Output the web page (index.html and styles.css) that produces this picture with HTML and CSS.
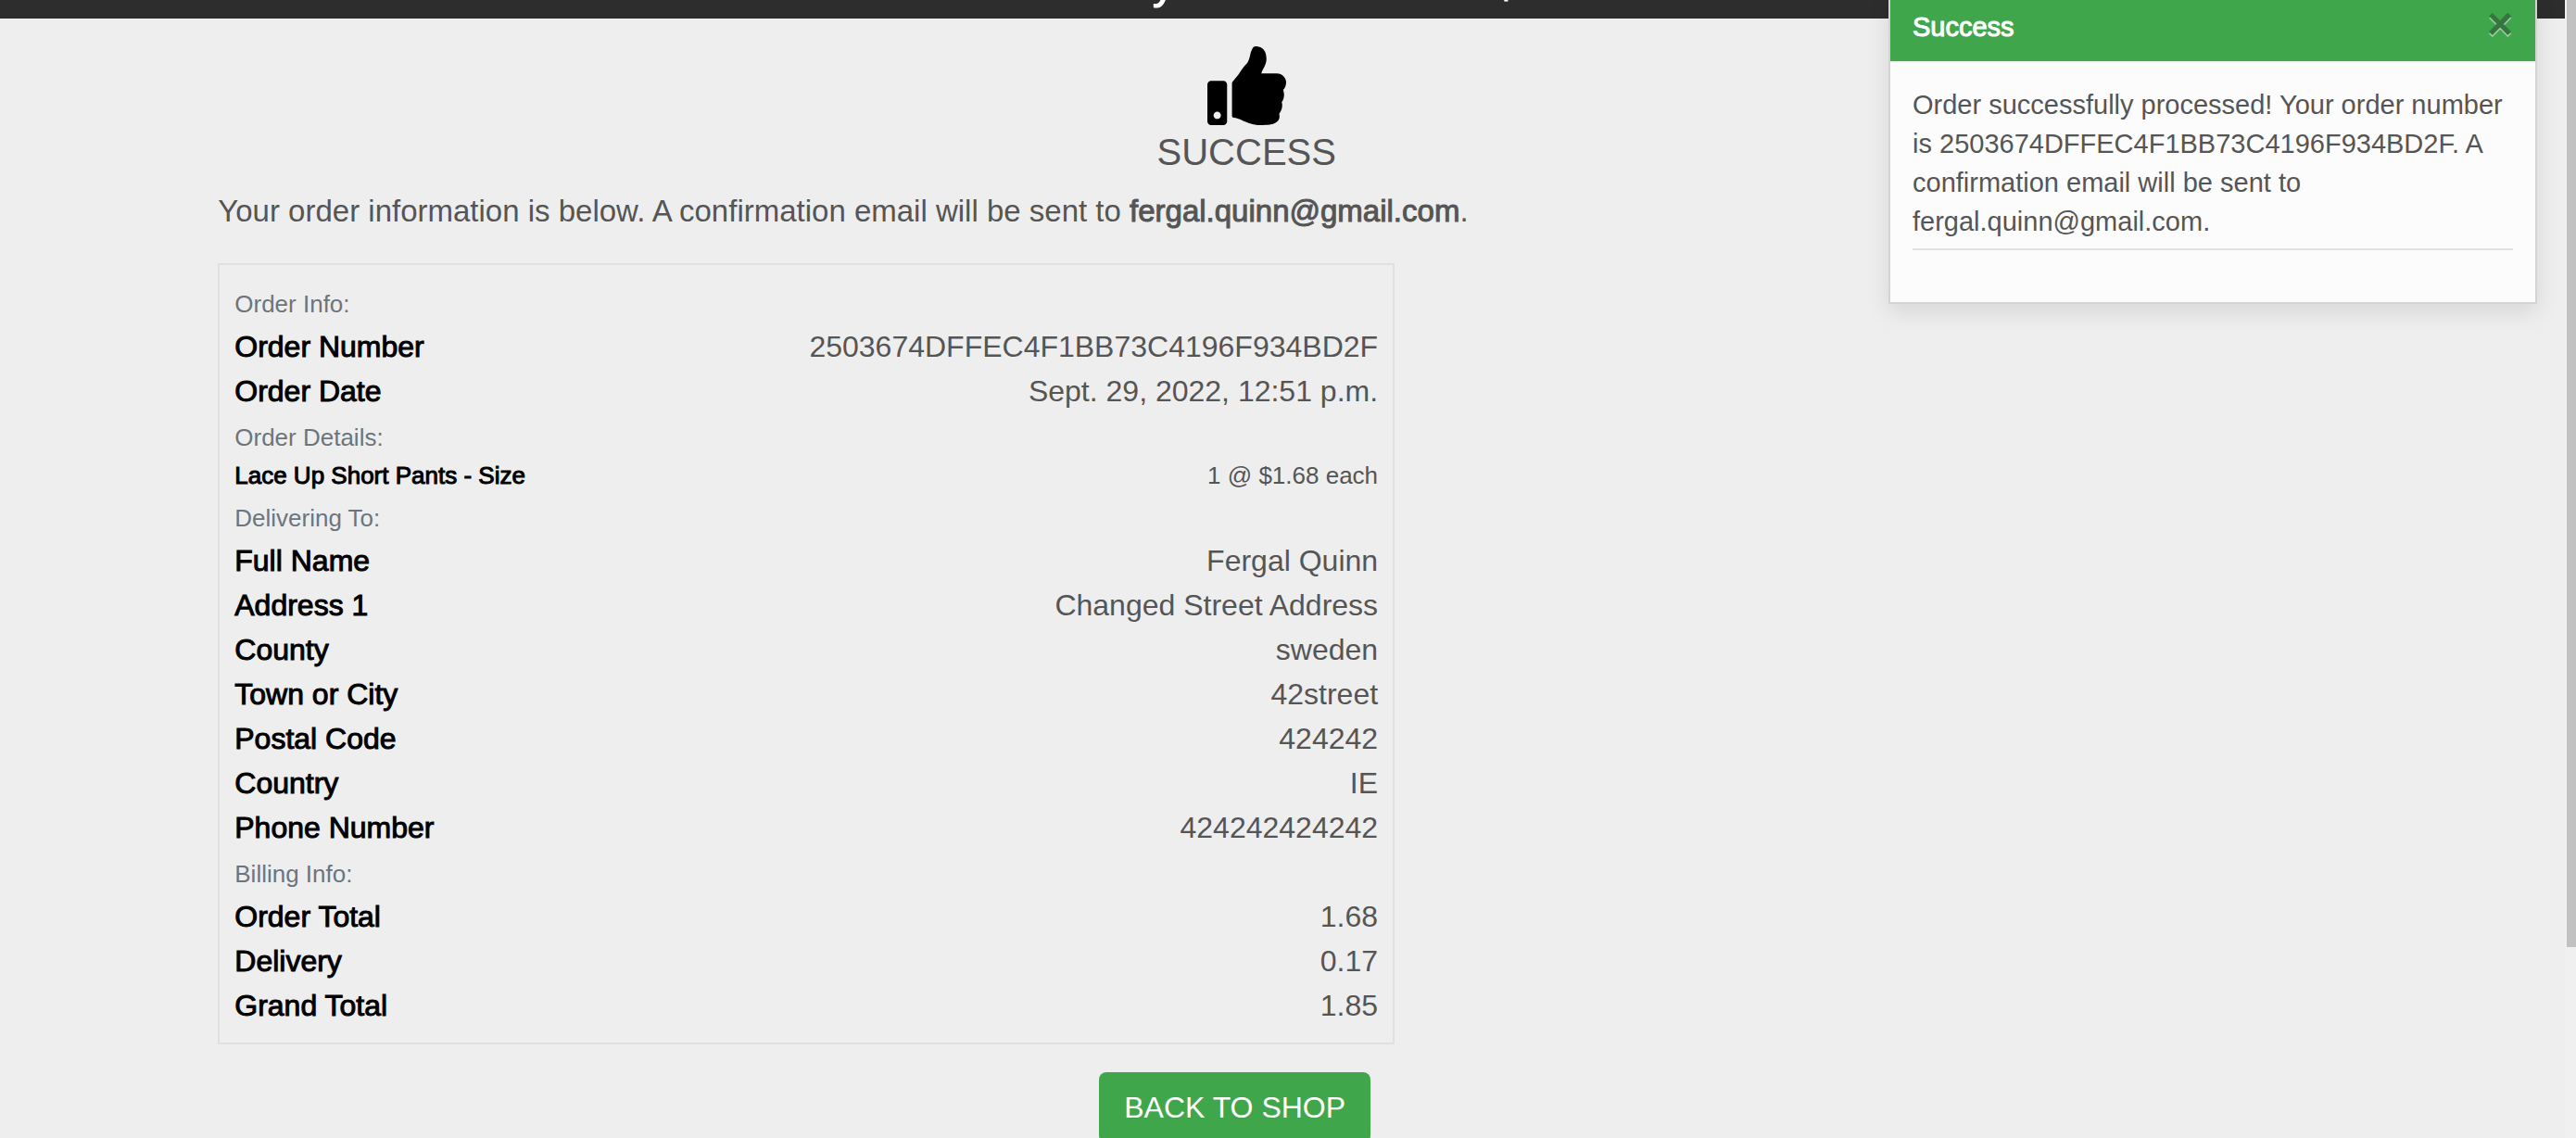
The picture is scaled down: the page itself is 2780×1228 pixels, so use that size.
FILE: index.html
```html
<!DOCTYPE html>
<html lang="en">
<head>
<meta charset="utf-8">
<meta name="viewport" content="width=device-width, initial-scale=1">
<title>Order Success</title>
<link rel="stylesheet" href="styles.css">
</head>
<body>
<div class="page">
  <header class="banner"><p class="banner-text">Free delivery on orders over $50.00!</p></header>
  <main class="checkout">
    <div class="heading">
      <svg class="thumb" viewBox="0 0 512 512" aria-hidden="true"><path d="M104 224H24c-13.255 0-24 10.745-24 24v240c0 13.255 10.745 24 24 24h80c13.255 0 24-10.745 24-24V248c0-13.255-10.745-24-24-24zM64 472c-13.255 0-24-10.745-24-24s10.745-24 24-24 24 10.745 24 24-10.745 24-24 24zM384 81.452c0 42.416-25.97 66.208-33.277 94.548h101.723c33.397 0 59.397 27.746 59.553 58.098.084 17.938-7.546 37.249-19.439 49.197l-.11.11c9.836 23.337 8.237 56.037-9.308 79.469 8.681 25.895-.069 57.704-16.382 74.757 4.298 17.598 2.244 32.575-6.148 44.632C440.202 511.587 389.616 512 346.839 512l-2.845-.001c-48.287-.017-87.806-17.598-119.56-31.725-15.957-7.099-36.821-15.887-52.651-16.178-6.54-.12-11.783-5.457-11.783-11.998v-213.77c0-3.2 1.282-6.271 3.558-8.521 39.614-39.144 56.648-80.587 89.117-113.111 14.804-14.832 20.188-37.236 25.393-58.902C282.515 39.293 291.817 0 312 0c24 0 72 8 72 81.452z"/></svg>
      <h1>SUCCESS</h1>
    </div>
    <p class="intro">Your order information is below. A confirmation email will be sent to <span class="strong">fergal.quinn@gmail.com</span>.</p>
    <div class="order">
      <section class="summary">
        <h2>Order Info:</h2>
        <dl>
          <div class="line"><dt>Order Number</dt><dd>2503674DFFEC4F1BB73C4196F934BD2F</dd></div>
          <div class="line"><dt>Order Date</dt><dd>Sept. 29, 2022, 12:51 p.m.</dd></div>
        </dl>
        <h2>Order Details:</h2>
        <dl>
          <div class="line small"><dt>Lace Up Short Pants - Size</dt><dd>1 @ $1.68 each</dd></div>
        </dl>
        <h2>Delivering To:</h2>
        <dl>
          <div class="line"><dt>Full Name</dt><dd>Fergal Quinn</dd></div>
          <div class="line"><dt>Address 1</dt><dd>Changed Street Address</dd></div>
          <div class="line"><dt>County</dt><dd>sweden</dd></div>
          <div class="line"><dt>Town or City</dt><dd>42street</dd></div>
          <div class="line"><dt>Postal Code</dt><dd>424242</dd></div>
          <div class="line"><dt>Country</dt><dd>IE</dd></div>
          <div class="line"><dt>Phone Number</dt><dd>424242424242</dd></div>
        </dl>
        <h2>Billing Info:</h2>
        <dl>
          <div class="line"><dt>Order Total</dt><dd>1.68</dd></div>
          <div class="line"><dt>Delivery</dt><dd>0.17</dd></div>
          <div class="line"><dt>Grand Total</dt><dd>1.85</dd></div>
        </dl>
      </section>
      <div class="actions"><a class="button" href="#shop">BACK TO SHOP</a></div>
    </div>
  </main>
  <aside class="toast" role="status">
    <div class="toast-header">
      <span class="toast-title">Success</span>
      <button class="close" type="button" aria-label="Close">×</button>
    </div>
    <div class="toast-body">
      <p>Order successfully processed! Your order number is 2503674DFFEC4F1BB73C4196F934BD2F. A confirmation email will be sent to fergal.quinn@gmail.com.</p>
    </div>
  </aside>
</div>
<div class="scroll-track"><div class="scroll-thumb"></div></div>
</body>
</html>
```

FILE: styles.css
```css
* {
  box-sizing: border-box;
}

body {
  margin: 0;
  height: 100vh;
  display: flex;
  overflow: hidden;
  background: #eee;
  color: #555;
  font: 32px/48px "Liberation Sans", Arial, sans-serif;
}

h1, h2, p, dl, dd {
  margin: 0;
  font-weight: 400;
}

.page {
  position: relative;
  flex: 1;
  min-width: 0;
  overflow: hidden;
}

/* heavier text that keeps the regular letter widths */
.strong,
dt,
.banner-text {
  -webkit-text-stroke: 1px currentColor;
}

.banner {
  display: flex;
  align-items: flex-end;
  justify-content: center;
  height: 20px;
  padding: 0 8px 11px 0;
  overflow: hidden;
  background: #2d2d2d;
  color: #fff;
}

.banner-text {
  font-size: 49px;
  line-height: 56px;
}

.checkout {
  padding: 30px 11.3% 0 8.5%;
}

.heading {
  display: flex;
  flex-direction: column;
  align-items: center;
  gap: 5px;
}

.thumb {
  width: 85px;
  height: 85px;
  fill: #000;
}

h1 {
  font-size: 40px;
  line-height: 48px;
}

.intro {
  margin: 16px 0 32px;
  font-size: 33px;
}

.order {
  width: 57.2%;
}

.summary {
  padding: 16px;
  border: 2px solid #dfe0e2;
}

h2 {
  display: flex;
  align-items: flex-end;
  height: 48px;
  padding-bottom: 2px;
  color: #6c757d;
  font-size: 26px;
  line-height: 39px;
}

.line {
  display: flex;
  justify-content: space-between;
}

dt {
  color: #000;
}

.small {
  font-size: 26px;
  line-height: 39px;
}

.actions {
  display: flex;
  justify-content: flex-end;
  padding: 30px 26px;
}

.button {
  padding: 14px 27px;
  border-radius: 8px;
  background: #40a64c;
  color: #fff;
  text-decoration: none;
}

.toast {
  position: absolute;
  top: 0;
  right: 30px;
  width: 700px;
  border: 2px solid #d4d4d4;
  border-top: 0;
  background: #fcfcfc;
  box-shadow: 0 8px 24px rgba(0, 0, 0, .1);
  font-size: 29px;
  line-height: 42px;
}

.toast-header {
  display: flex;
  justify-content: space-between;
  padding: 8px 24px 16px;
  border-bottom: 2px solid #f0f4f0;
  background: #40a64c;
  color: #fff;
}

.toast-title {
  -webkit-text-stroke: 1px currentColor;
}

.close {
  padding: 0;
  border: 0;
  background: none;
  color: #38743f;
  font: 700 48px/36px "Liberation Sans", Arial, sans-serif;
  text-shadow: 0 2px 0 #a5d3aa;
  align-self: flex-start;
}

.toast-body {
  padding: 24px 24px 56px;
}

.toast-body p {
  padding-bottom: 8px;
  border-bottom: 2px solid #e1e1e1;
}

.scroll-track {
  flex: 0 0 12px;
  padding-left: 2px;
  background: #f0f0f0;
}

.scroll-thumb {
  height: 83.2%;
  background: #c1c1c1;
}
```
